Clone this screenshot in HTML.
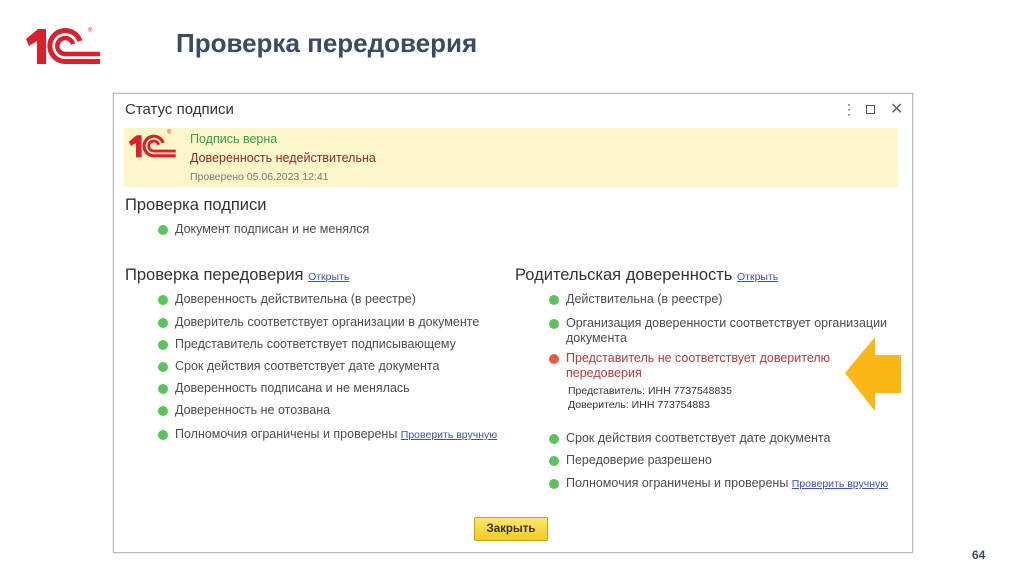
<!DOCTYPE html>
<html><head><meta charset="utf-8"><style>
body{margin:0;width:1024px;height:574px;background:#fff;position:relative;overflow:hidden;font-family:"Liberation Sans",Arial,sans-serif}
.a{position:absolute;white-space:nowrap}
.t{font-size:12.5px;color:#4d4d4d}
.d{position:absolute;width:10px;height:10px;border-radius:50%;background:#5cc25c}
.r{background:#e55a4a}
.lk{font-size:10.5px;color:#3b52b8;text-decoration:underline}
h2{margin:0;font-weight:normal;font-size:16.5px;color:#333;position:absolute;white-space:nowrap}
</style></head><body>
<svg width="0" height="0" style="position:absolute"><defs><g id="logo">
<path d="M0 13 L12 3 L20 3 L20 38 L11 38 L11 15 L3 20 Z" fill="#d9202b"/>
<path d="M54 15 A15.5 15.5 0 1 0 40 35.5 L74 35.5" fill="none" stroke="#d9202b" stroke-width="5"/>
<path d="M47 18 A8 8 0 1 0 40 28 L74 28" fill="none" stroke="#d9202b" stroke-width="4.5"/>
</g></defs></svg>
<svg class="a" style="left:26px;top:26px" width="76" height="40" viewBox="0 0 76 40"><use href="#logo"/></svg>
<div class="a" style="left:88px;top:28px;font-size:6px;color:#d9202b">®</div>
<div class="a" style="left:176px;top:28px;font-size:26px;font-weight:bold;color:#3b4b60">Проверка передоверия</div>

<div class="a" style="left:113px;top:93px;width:798px;height:458px;border:1px solid #bdbdbd;box-shadow:0 0 1px #999"></div>
<div class="a" style="left:125px;top:101px;font-size:15px;color:#333">Статус подписи</div>
<div class="a" style="left:842px;top:102px;font-size:14px;color:#666;line-height:14px">⋮</div>
<div class="a" style="left:866px;top:105px;width:7px;height:7px;border:1.5px solid #555"></div>
<div class="a" style="left:890px;top:99px;font-size:16px;color:#666">✕</div>
<div class="a" style="left:124px;top:128px;width:774px;height:59px;background:#fdf6c9"></div>
<svg class="a" style="left:129px;top:133px" width="48" height="26" viewBox="0 0 76 40"><use href="#logo"/></svg>
<div class="a" style="left:167px;top:130px;font-size:6px;color:#d9202b">®</div>
<div class="a" style="left:190px;top:132px;font-size:12.5px;color:#3a9a4e">Подпись верна</div>
<div class="a" style="left:190px;top:151px;font-size:12.5px;color:#8c2a2a">Доверенность недействительна</div>
<div class="a" style="left:190px;top:171px;font-size:10.5px;color:#777">Проверено 05.06.2023 12:41</div>

<h2 style="left:125px;top:196px">Проверка подписи</h2>
<div class="d" style="left:158px;top:225px"></div><div class="a t" style="left:175px;top:222px">Документ подписан и не менялся</div>

<h2 style="left:125px;top:266px">Проверка передоверия <span class="lk">Открыть</span></h2>
<div class="d" style="left:158px;top:295px"></div><div class="a t" style="left:175px;top:292px">Доверенность действительна (в реестре)</div>
<div class="d" style="left:158px;top:318px"></div><div class="a t" style="left:175px;top:315px">Доверитель соответствует организации в документе</div>
<div class="d" style="left:158px;top:340px"></div><div class="a t" style="left:175px;top:337px">Представитель соответствует подписывающему</div>
<div class="d" style="left:158px;top:362px"></div><div class="a t" style="left:175px;top:359px">Срок действия соответствует дате документа</div>
<div class="d" style="left:158px;top:384px"></div><div class="a t" style="left:175px;top:381px">Доверенность подписана и не менялась</div>
<div class="d" style="left:158px;top:406px"></div><div class="a t" style="left:175px;top:403px">Доверенность не отозвана</div>
<div class="d" style="left:158px;top:430px"></div><div class="a t" style="left:175px;top:427px">Полномочия ограничены и проверены <span class="lk">Проверить вручную</span></div>

<h2 style="left:515px;top:266px">Родительская доверенность <span class="lk">Открыть</span></h2>
<div class="d" style="left:549px;top:295px"></div><div class="a t" style="left:566px;top:292px">Действительна (в реестре)</div>
<div class="d" style="left:549px;top:319px"></div><div class="a t" style="left:566px;top:316px;line-height:15px">Организация доверенности соответствует организации<br>документа</div>
<div class="d r" style="left:549px;top:354px"></div><div class="a t" style="left:566px;top:351px;line-height:15px;color:#b83a3a">Представитель не соответствует доверителю<br>передоверия</div>
<div class="a" style="left:568px;top:384px;font-size:10.5px;color:#333;line-height:14px">Представитель: ИНН 7737548835<br>Доверитель: ИНН 773754883</div>
<div class="d" style="left:549px;top:434px"></div><div class="a t" style="left:566px;top:431px">Срок действия соответствует дате документа</div>
<div class="d" style="left:549px;top:456px"></div><div class="a t" style="left:566px;top:453px">Передоверие разрешено</div>
<div class="d" style="left:549px;top:479px"></div><div class="a t" style="left:566px;top:476px">Полномочия ограничены и проверены <span class="lk">Проверить вручную</span></div>

<svg class="a" style="left:843px;top:335px" width="60" height="80"><polygon points="2,38 32,2 32,20 58,20 58,58 32,58 32,76" fill="#fbb716"/></svg>

<div class="a" style="left:474px;top:517px;width:72px;height:22px;background:linear-gradient(#fde869,#f2c925);border:1px solid #c9a418;border-radius:2px;font-size:11.5px;font-weight:bold;color:#333;text-align:center;line-height:22px">Закрыть</div>

<div class="a" style="left:972px;top:548px;font-size:12px;font-weight:bold;color:#3b4b60">64</div>
</body></html>
